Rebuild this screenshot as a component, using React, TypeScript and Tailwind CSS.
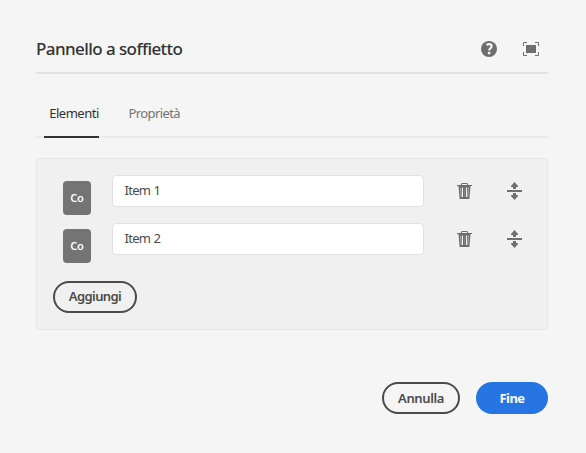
import React from "react";

function HelpIcon() {
  return (
    <svg width="16" height="16" viewBox="0 0 16 16" aria-label="Guida">
      <circle cx="8" cy="8" r="8" fill="#6e6e6e" />
      <path d="M5.5 4.1C6.3 3.5 7.1 3.2 8 3.2c1.6 0 2.6.8 2.6 2.1 0 1.9-2.4 2-2.4 4.2" fill="none" stroke="#f5f5f5" strokeWidth="2.2" />
      <circle cx="8.1" cy="12.1" r="1.4" fill="#f5f5f5" />
    </svg>
  );
}

function FullScreenIcon() {
  return (
    <svg width="16" height="14" viewBox="0 0 16 14" aria-label="Schermo intero">
      <path d="M.5 4V.5H4M12 .5h3.5V4M15.5 10v3.5H12M4 13.5H.5V10" fill="none" stroke="#6e6e6e" />
      <rect x="3" y="3" width="10" height="8" fill="#6e6e6e" />
    </svg>
  );
}

function TrashIcon() {
  return (
    <svg width="15" height="16" viewBox="0 0 15 16" aria-label="Elimina">
      <path d="M4.5 2.5V.9q0-.4.4-.4h5.2q.4 0 .4.4v1.6" fill="none" stroke="#6e6e6e" />
      <path d="M0 2h15v1H13.5l-1.1 13H2.6L1.5 3H0z" fill="#6e6e6e" />
      <path d="M3.6 4.5l.7 9.5M11.4 4.5l-.7 9.5" stroke="#b8b8b8" strokeWidth="1" />
      <path d="M5.5 4.5V14M9.5 4.5V14" stroke="#f0f0f0" strokeWidth="1" />
      <path d="M7.5 4.5V14" stroke="#8a8a8a" strokeWidth=".8" />
    </svg>
  );
}

function MoveIcon() {
  return (
    <svg width="15" height="18" viewBox="0 0 15 18" fill="#6e6e6e" aria-label="Riordina">
      <path d="M7.5 0L11 4v1H9v2H6V5H4V4zM0 8h15v2H0zM6 11h3v2h2v1l-3.5 4L4 14v-1h2z" />
    </svg>
  );
}

function ItemRow({ label }: { label: string }) {
  return (
    <div className="flex h-12 items-start">
      <div className="ml-[10px] mt-1.5 flex h-[34px] w-7 items-center justify-center rounded bg-[#747474] text-[11px] font-semibold tracking-[-0.1px] text-white">
        Co
      </div>
      <div className="ml-[21px] flex h-8 w-[312px] items-center rounded border border-[#e1e1e1] bg-white pb-px pl-[11.5px] text-[13px] tracking-[-0.7px] [word-spacing:0.5px] text-[#4b4b4b]">
        {label}
      </div>
      <button className="ml-[33px] mt-2"><TrashIcon /></button>
      <button className="ml-[35px] mt-[7px]"><MoveIcon /></button>
    </div>
  );
}

export default function App() {
  return (
    <main className="flex h-[453px] w-[586px] flex-col bg-[#f5f5f5] px-[38px] pl-9 font-['Noto_Sans','Open_Sans',sans-serif]">
      <header className="flex h-[74px] shrink-0 items-start border-b-2 border-[#e1e1e1]">
        <h1 className="mt-[37px] whitespace-nowrap text-[17px] font-medium leading-6 tracking-[-0.58px] text-[#323232]">
          Pannello a soffietto
        </h1>
        <button className="ml-auto mt-[41px]"><HelpIcon /></button>
        <button className="ml-[26px] mr-[9px] mt-[42px]"><FullScreenIcon /></button>
      </header>
      <nav className="flex h-16 shrink-0 items-end border-b-2 border-[#eaeaea] pl-2 text-[13px] leading-5">
        <div className="-mb-0.5 flex h-[35px] w-[55px] justify-center whitespace-nowrap border-b-2 border-[#323232] pl-[5px] tracking-[-0.5px] text-[#323232]">
          Elementi
        </div>
        <div className="-mb-0.5 ml-[29.5px] h-[35px] tracking-[-0.6px] text-[#747474]">Proprietà</div>
      </nav>
      <section className="mt-5 h-[172px] shrink-0 rounded border border-[#e7e7e7] bg-[#f0f0f0] pl-4 pt-4">
        <ItemRow label="Item 1" />
        <ItemRow label="Item 2" />
        <button className="mt-[10px] flex h-8 w-[84px] items-center justify-center rounded-full border-2 border-[#4b4b4b] pb-px text-[13px] font-semibold tracking-[-0.6px] text-[#4b4b4b]">
          Aggiungi
        </button>
      </section>
      <footer className="mt-[52px] flex justify-end gap-4 text-[13px]">
        <button className="flex h-8 w-[78px] items-center justify-center rounded-full border-2 border-[#4b4b4b] pt-px font-semibold tracking-[-0.4px] text-[#4b4b4b]">
          Annulla
        </button>
        <button className="flex h-8 w-[72px] items-center justify-center rounded-full bg-[#2775e2] pt-px font-bold tracking-[-0.5px] text-white">
          Fine
        </button>
      </footer>
    </main>
  );
}
